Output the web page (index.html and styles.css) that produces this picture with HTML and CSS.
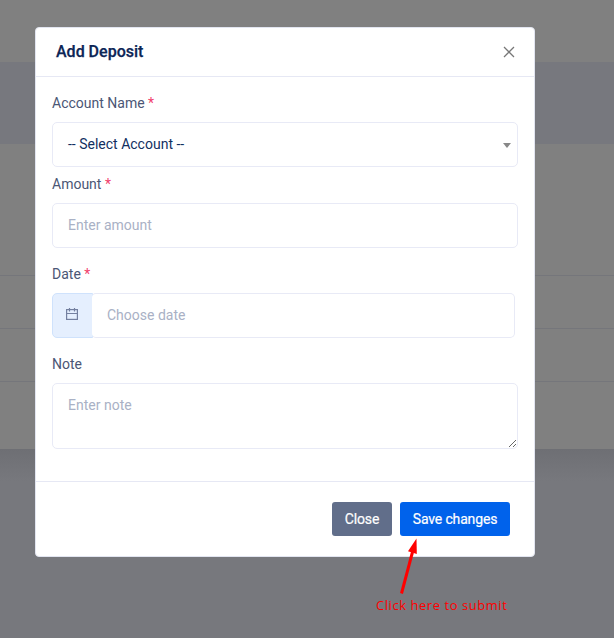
FILE: index.html
```html
<!DOCTYPE html>
<html lang="en">
<head>
<meta charset="utf-8">
<title>Add Deposit</title>
<link rel="stylesheet" href="styles.css">
</head>
<body>
<div class="page">
  <div class="topbar"></div>
  <div class="band"></div>
  <div class="table-card">
    <div class="row row-first"></div>
    <div class="row"></div>
    <div class="row"></div>
    <div class="row row-last"></div>
  </div>
  <div class="shade"></div>
</div>
<div class="overlay">
  <div class="modal">
    <div class="modal-header">
      <h5 class="title">Add Deposit</h5>
      <button class="close-icon" aria-label="Close"><svg width="12" height="12" viewBox="0 0 12 12"><path d="M1 1L11 11M11 1L1 11" stroke="#777" stroke-width="1.25" fill="none"/></svg></button>
    </div>
    <form class="modal-body">
      <div class="group group-tight">
        <label class="label">Account Name <span class="req">*</span></label>
        <div class="control select"><span>-- Select Account --</span><span class="caret"></span></div>
      </div>
      <div class="group">
        <label class="label">Amount <span class="req">*</span></label>
        <input class="control" type="text" placeholder="Enter amount">
      </div>
      <div class="group">
        <label class="label">Date <span class="req">*</span></label>
        <div class="input-group">
          <span class="addon"><svg width="12" height="12" viewBox="0 0 12 12" fill="none" stroke="#7480a0" stroke-width="1.2"><rect x=".6" y="1.6" width="10.8" height="9.8"/><path d="M.6 5.5H11.4M3.5 0V3.4M8.5 0V3.4"/></svg></span>
          <input class="control date" type="text" placeholder="Choose date">
        </div>
      </div>
      <div class="group">
        <label class="label">Note</label>
        <textarea class="control note" placeholder="Enter note"></textarea>
      </div>
    </form>
    <div class="modal-footer">
      <button class="btn btn-secondary">Close</button>
      <button class="btn btn-primary">Save changes</button>
    </div>
  </div>
</div>
<svg class="arrow" width="24" height="60" viewBox="0 0 24 60"><path d="M6.5 55.5L17.5 14" stroke="#f00" stroke-width="3" fill="none"/><path d="M21.5 .5L13 13.3L21.8 16Z" fill="#f00"/></svg>
<div class="callout">Click here to submit</div>
</body>
</html>
```
FILE: styles.css
```css
* { box-sizing: border-box; }
body {
  margin: 0;
  height: 638px;
  overflow: hidden;
  background: #77787d;
  font: 14px/21px Roboto, sans-serif;
  color: #506690;
}
.page { height: 638px; }
.topbar { height: 62px; background: #808080; }
.band { height: 82px; background: #77787e; }
.table-card { background: #808080; }
.shade { height: 32px; background: linear-gradient(#6e6f74, #77787d); }
.row { height: 53px; border-bottom: 1px solid #75767b; }
.row-first { height: 132px; }
.row-last { height: 67px; border: 0; }
.overlay {
  position: absolute;
  inset: 0;
  padding: 27px 0 0 35px;
}
.modal {
  width: 500px;
  height: 530px;
  background: #fff;
  border: 1px solid #e2e5f0;
  border-radius: 4px;
}
.modal-header {
  display: flex;
  align-items: center;
  justify-content: space-between;
  height: 49px;
  padding: 0 19px 0 20px;
  border-bottom: 1px solid #e6e8f4;
}
.title {
  margin: 0;
  font-size: 16px;
  font-weight: 500;
  line-height: 24px;
  color: #0c2556;
  -webkit-text-stroke: .25px #0c2556;
}
.close-icon {
  display: flex;
  padding: 0;
  border: 0;
  background: none;
}
.modal-body { height: 405px; padding: 16px; border-bottom: 1px solid #e6e8f4; }
.group { width: 466px; margin-bottom: 16px; }
.group-tight { margin-bottom: 7px; }
.label { display: block; margin-bottom: 8px; color: #4b5675; }
.req { color: #f1416c; }
.control {
  display: block;
  width: 100%;
  height: 45px;
  padding: 0 15px 1px;
  border: 1px solid #e8eaf6;
  border-radius: 5px;
  background: #fff;
  font: 14px/21px Roboto, sans-serif;
  color: #12305f;
}
.control::placeholder { color: #a9b1c5; opacity: 1; }
.select {
  display: flex;
  align-items: center;
  justify-content: space-between;
  padding: 0 6px 0 15px;
}
.caret {
  margin-top: 2px;
  border: 4px solid transparent;
  border-top: 5px solid #888;
  border-bottom: 0;
}
.input-group { display: flex; width: 463px; }
.addon {
  display: flex;
  align-items: center;
  justify-content: center;
  width: 41px;
  height: 45px;
  padding: 0 1px 3px 0;
  border: 1px solid #cfe2fc;
  border-radius: 5px 0 0 5px;
  background: #e5effe;
}
.date { flex: 1; width: auto; margin-left: -2px; border-left-color: #e5effe; }
.note { height: 66px; padding-top: 11px; resize: vertical; }
.modal-footer {
  display: flex;
  justify-content: flex-end;
  gap: 8px;
  padding: 20px 24px;
}
.btn {
  height: 34px;
  padding: 0;
  border: 0;
  border-radius: 3px;
  font: 400 14px/21px Roboto, sans-serif;
  letter-spacing: -.15px;
  -webkit-text-stroke: .2px #fff;
  white-space: nowrap;
  color: #fff;
}
.btn-secondary { width: 60px; background: #616e8a; }
.btn-primary { width: 110px; background: #0062eb; }
.arrow { position: absolute; left: 395px; top: 538px; }
.callout {
  position: absolute;
  left: 376px;
  top: 595px;
  font: 13px/20px "Open Sans", sans-serif;
  letter-spacing: .55px;
  white-space: nowrap;
  color: #f00;
}
```
